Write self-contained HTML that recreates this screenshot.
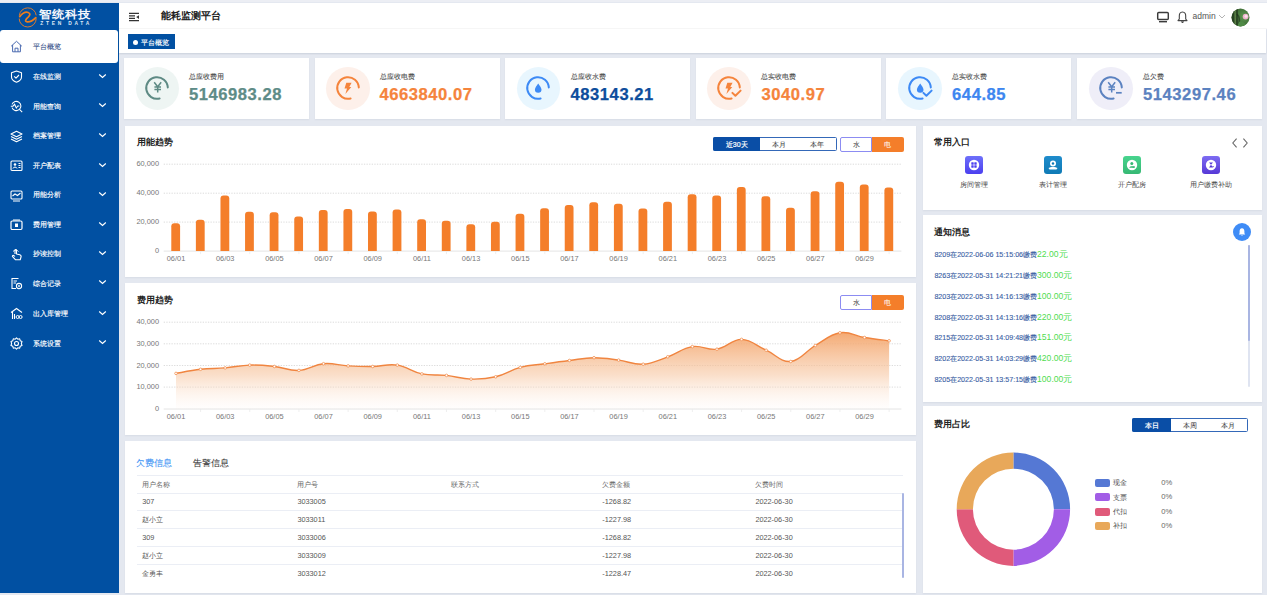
<!DOCTYPE html><html><head><meta charset="utf-8"><style>
*{margin:0;padding:0;box-sizing:border-box}
html,body{width:1267px;height:595px;overflow:hidden;background:#e4e8f0;font-family:"Liberation Sans", sans-serif}
.ab{position:absolute}
.card{position:absolute;background:#fff;box-shadow:0 1px 1.5px rgba(60,70,100,.07)}
.t{position:absolute;white-space:nowrap;line-height:1}
</style></head><body>
<div class="ab" style="left:0;top:0;width:1267px;height:2px;background:#eceef4"></div>
<div class="ab" style="left:0;top:2.5px;width:118.8px;height:590.5px;background:#0150a2"></div>
<svg class="ab" style="left:16px;top:6px" width="24" height="22" viewBox="0 0 24 22">
<path d="M3.3 9.6 A8.5 8.5 0 0 1 20.2 9.3 M20.2 12.4 A8.5 8.5 0 0 1 3.2 12.6" fill="none" stroke="#d97a30" stroke-width="1.0"/>
<path d="M3.7 10.6 C6.3 7.4 9.6 5.6 12.2 6.5 C14.8 7.4 14.1 9.3 12.2 11.1 C9.6 13.3 8.5 15.6 11.1 15.9 C14.1 16.3 17.4 14.1 19.8 11.7" fill="none" stroke="#ee7d1c" stroke-width="1.75" stroke-linecap="round"/>
</svg>
<div class="t" style="left:39px;top:8.9px;font-size:12.8px;font-weight:bold;color:#f4f7fc;letter-spacing:0.1px;transform:scaleY(0.89);transform-origin:0 0">智统科技</div>
<div class="t" style="left:40.3px;top:21.5px;font-size:4.9px;font-weight:bold;color:#dfe8f5;letter-spacing:2.75px">ZTEN DATA</div>
<div class="ab" style="left:0;top:30px;width:118.2px;height:32.5px;background:#fff;border-radius:3px"></div>
<svg class="ab" style="left:9.5px;top:39.5px" width="13" height="13" viewBox="0 0 13 13">
<path d="M1.2 6.2 L6.5 1.3 L11.8 6.2 M2.6 5 V11.8 H10.4 V5 M5 11.8 V8.2 H8 V11.8" fill="none" stroke="#4a6ab0" stroke-width="1" stroke-linejoin="round"/>
</svg>
<div class="t" style="left:33px;top:43px;font-size:7px;-webkit-text-stroke:0.12px #38528a;color:#38528a">平台概览</div>
<svg class="ab" style="left:9.6px;top:70.1px" width="13" height="13" viewBox="0 0 13 13"><path d="M6.5 1 L11.5 2.8 V7 C11.5 9.6 9 11.3 6.5 12.3 C4 11.3 1.5 9.6 1.5 7 V2.8 Z M4.2 6.4 L6 8.2 L9 5" fill="none" stroke="#fff" stroke-width="1.1" stroke-linejoin="round"/></svg>
<div class="t" style="left:33px;top:72.8px;font-size:7px;-webkit-text-stroke:0.15px #fff;color:#fff">在线监测</div>
<svg class="ab" style="left:98px;top:72.6px" width="9" height="6" viewBox="0 0 9 6"><path d="M1.2 1.5 L4.5 4.5 L7.8 1.5" fill="none" stroke="#fff" stroke-width="1.2"/></svg>
<svg class="ab" style="left:9.6px;top:99.9px" width="13" height="13" viewBox="0 0 13 13"><path d="M2 4.4 A4.6 4.6 0 1 1 2 7.6" fill="none" stroke="#fff" stroke-width="1.05"/><path d="M0.8 6.2 H3 L4.6 4.3 L6.3 8 L7.8 6 H9.4 M9.5 9.4 L12.2 12.1" fill="none" stroke="#fff" stroke-width="1.05"/></svg>
<div class="t" style="left:33px;top:102.6px;font-size:7px;-webkit-text-stroke:0.15px #fff;color:#fff">用能查询</div>
<svg class="ab" style="left:98px;top:102.4px" width="9" height="6" viewBox="0 0 9 6"><path d="M1.2 1.5 L4.5 4.5 L7.8 1.5" fill="none" stroke="#fff" stroke-width="1.2"/></svg>
<svg class="ab" style="left:9.6px;top:129.6px" width="13" height="13" viewBox="0 0 13 13"><path d="M6.5 1.2 L12 4 L6.5 6.8 L1 4 Z M1 6.5 L6.5 9.3 L12 6.5 M1 9 L6.5 11.8 L12 9" fill="none" stroke="#fff" stroke-width="1.1" stroke-linejoin="round"/></svg>
<div class="t" style="left:33px;top:132.3px;font-size:7px;-webkit-text-stroke:0.15px #fff;color:#fff">档案管理</div>
<svg class="ab" style="left:98px;top:132.1px" width="9" height="6" viewBox="0 0 9 6"><path d="M1.2 1.5 L4.5 4.5 L7.8 1.5" fill="none" stroke="#fff" stroke-width="1.2"/></svg>
<svg class="ab" style="left:9.6px;top:159.4px" width="13" height="13" viewBox="0 0 13 13"><rect x="1" y="2" width="11" height="9.5" rx="1" fill="none" stroke="#fff" stroke-width="1.1"/><circle cx="5" cy="5.5" r="1.3" fill="#fff"/><path d="M3 9.5 C3.3 7.6 6.7 7.6 7 9.5 M8.5 4.5 H10.5 M8.5 6.5 H10.5 M8.5 8.5 H10.5" fill="none" stroke="#fff" stroke-width="1"/></svg>
<div class="t" style="left:33px;top:162.1px;font-size:7px;-webkit-text-stroke:0.15px #fff;color:#fff">开户配表</div>
<svg class="ab" style="left:98px;top:161.9px" width="9" height="6" viewBox="0 0 9 6"><path d="M1.2 1.5 L4.5 4.5 L7.8 1.5" fill="none" stroke="#fff" stroke-width="1.2"/></svg>
<svg class="ab" style="left:9.6px;top:188.6px" width="13" height="13" viewBox="0 0 13 13"><rect x="1" y="2" width="11" height="8" rx="1" fill="none" stroke="#fff" stroke-width="1.1"/><path d="M2.5 7 L5 5 L7.5 6.5 L10.5 4 M3 12 H10" fill="none" stroke="#fff" stroke-width="1.1"/></svg>
<div class="t" style="left:33px;top:191.3px;font-size:7px;-webkit-text-stroke:0.15px #fff;color:#fff">用能分析</div>
<svg class="ab" style="left:98px;top:191.1px" width="9" height="6" viewBox="0 0 9 6"><path d="M1.2 1.5 L4.5 4.5 L7.8 1.5" fill="none" stroke="#fff" stroke-width="1.2"/></svg>
<svg class="ab" style="left:9.6px;top:218.4px" width="13" height="13" viewBox="0 0 13 13"><rect x="1" y="3" width="11" height="8.5" rx="1.2" fill="none" stroke="#fff" stroke-width="1.2"/><rect x="5" y="5.5" width="3" height="3.5" fill="#fff"/><path d="M3 2 H10" stroke="#fff" stroke-width="1"/></svg>
<div class="t" style="left:33px;top:221.1px;font-size:7px;-webkit-text-stroke:0.15px #fff;color:#fff">费用管理</div>
<svg class="ab" style="left:98px;top:220.9px" width="9" height="6" viewBox="0 0 9 6"><path d="M1.2 1.5 L4.5 4.5 L7.8 1.5" fill="none" stroke="#fff" stroke-width="1.2"/></svg>
<svg class="ab" style="left:9.6px;top:247.6px" width="13" height="13" viewBox="0 0 13 13"><path d="M5 6 V2.2 C5 1.3 6.5 1.3 6.5 2.2 V6 L9.8 6.8 C11 7.2 11.3 8 11 9 L10.2 11.8 H5.6 L2.6 8.6 C2.1 8 2.8 7.1 3.6 7.5 L5 8.4" fill="none" stroke="#fff" stroke-width="1.1" stroke-linejoin="round"/><path d="M3 3.5 A3.5 3.5 0 0 1 8.5 3.5" fill="none" stroke="#fff" stroke-width="0.9"/></svg>
<div class="t" style="left:33px;top:250.3px;font-size:7px;-webkit-text-stroke:0.15px #fff;color:#fff">抄读控制</div>
<svg class="ab" style="left:98px;top:250.1px" width="9" height="6" viewBox="0 0 9 6"><path d="M1.2 1.5 L4.5 4.5 L7.8 1.5" fill="none" stroke="#fff" stroke-width="1.2"/></svg>
<svg class="ab" style="left:9.6px;top:276.9px" width="13" height="13" viewBox="0 0 13 13"><path d="M8.5 1.5 H2 V11.5 H6" fill="none" stroke="#fff" stroke-width="1.1"/><path d="M3.5 4 H7 M3.5 6 H6" stroke="#fff" stroke-width="1"/><circle cx="9" cy="9" r="2.6" fill="none" stroke="#fff" stroke-width="1.1"/><circle cx="9" cy="9" r="0.9" fill="#fff"/></svg>
<div class="t" style="left:33px;top:279.6px;font-size:7px;-webkit-text-stroke:0.15px #fff;color:#fff">综合记录</div>
<svg class="ab" style="left:98px;top:279.4px" width="9" height="6" viewBox="0 0 9 6"><path d="M1.2 1.5 L4.5 4.5 L7.8 1.5" fill="none" stroke="#fff" stroke-width="1.2"/></svg>
<svg class="ab" style="left:9.6px;top:307.2px" width="13" height="13" viewBox="0 0 13 13"><path d="M1 5.5 L6.5 1.5 L12 5.5 M2.5 4.5 V12 M4.5 7 V12" fill="none" stroke="#fff" stroke-width="1.1"/><circle cx="7.6" cy="10" r="1.5" fill="none" stroke="#fff" stroke-width="1"/><circle cx="10.6" cy="10" r="1.5" fill="none" stroke="#fff" stroke-width="1"/></svg>
<div class="t" style="left:33px;top:309.9px;font-size:7px;-webkit-text-stroke:0.15px #fff;color:#fff">出入库管理</div>
<svg class="ab" style="left:98px;top:309.7px" width="9" height="6" viewBox="0 0 9 6"><path d="M1.2 1.5 L4.5 4.5 L7.8 1.5" fill="none" stroke="#fff" stroke-width="1.2"/></svg>
<svg class="ab" style="left:9.6px;top:336.9px" width="13" height="13" viewBox="0 0 13 13"><circle cx="6.5" cy="6.5" r="2" fill="none" stroke="#fff" stroke-width="1.1"/><path d="M6.5 0.9 L7.8 2.2 L9.7 1.8 L10.2 3.7 L12 4.4 L11.4 6.5 L12 8.6 L10.2 9.3 L9.7 11.2 L7.8 10.8 L6.5 12.1 L5.2 10.8 L3.3 11.2 L2.8 9.3 L1 8.6 L1.6 6.5 L1 4.4 L2.8 3.7 L3.3 1.8 L5.2 2.2 Z" fill="none" stroke="#fff" stroke-width="1.1" stroke-linejoin="round"/></svg>
<div class="t" style="left:33px;top:339.6px;font-size:7px;-webkit-text-stroke:0.15px #fff;color:#fff">系统设置</div>
<svg class="ab" style="left:98px;top:339.4px" width="9" height="6" viewBox="0 0 9 6"><path d="M1.2 1.5 L4.5 4.5 L7.8 1.5" fill="none" stroke="#fff" stroke-width="1.2"/></svg>
<div class="ab" style="left:118.8px;top:3px;width:1148.2px;height:26.3px;background:#fff;border-bottom:1px solid #f6f6f6"></div>
<svg class="ab" style="left:128px;top:12px" width="12" height="10" viewBox="0 0 12 10">
<path d="M1 1.4 H11 M1 3.8 H7 M1 6.4 H7 M1 8.6 H11" stroke="#333" stroke-width="1.2"/><path d="M11 3.3 L8.2 5.1 L11 6.9 Z" fill="#333"/></svg>
<div class="t" style="left:160.5px;top:11.2px;font-size:10.4px;font-weight:bold;color:#222">能耗监测平台</div>
<svg class="ab" style="left:1156px;top:11px" width="14" height="12" viewBox="0 0 14 12">
<rect x="1.7" y="1.4" width="10.6" height="7" rx="1" fill="none" stroke="#3a3a3a" stroke-width="1.45"/><path d="M3 10.7 H11" stroke="#3a3a3a" stroke-width="1.4"/></svg>
<svg class="ab" style="left:1177px;top:11px" width="11" height="12" viewBox="0 0 11 12">
<path d="M5.5 1 C3 1 2.3 3.2 2.3 5 V8 L1 9.6 H10 L8.7 8 V5 C8.7 3.2 8 1 5.5 1 Z M4.4 10.6 L5.5 11.5 L6.6 10.6" fill="none" stroke="#444" stroke-width="1.1" stroke-linejoin="round"/></svg>
<div class="t" style="left:1192.5px;top:12.2px;font-size:8.5px;color:#555">admin</div>
<svg class="ab" style="left:1217.8px;top:14px" width="8" height="5" viewBox="0 0 8 5"><path d="M1 1 L4 4 L7 1" fill="none" stroke="#aaa" stroke-width="0.9"/></svg>
<svg class="ab" style="left:1231px;top:8px" width="19" height="19" viewBox="0 0 19 19">
<defs><clipPath id="av"><circle cx="9.5" cy="9.5" r="9"/></clipPath><radialGradient id="avg" cx="0.65" cy="0.45" r="0.75"><stop offset="0" stop-color="#5f9a52"/><stop offset="1" stop-color="#2c5226"/></radialGradient></defs>
<g clip-path="url(#av)"><rect width="19" height="19" fill="url(#avg)"/><path d="M0 0 H7 V19 H0 Z" fill="#233a1e" opacity=".75"/><path d="M4.2 0 C3.8 6 4.5 12 4 19" stroke="#7fa860" stroke-width="0.9" fill="none"/><path d="M6 6 C8 8 9 11 8 16" stroke="#1b2d18" stroke-width="1.6" fill="none" opacity=".6"/><path d="M8 14 C11 12 14 15 17 19 H6 Z" fill="#4f8a45"/><circle cx="14.6" cy="8.6" r="2.9" fill="#eeb3cc"/><circle cx="15" cy="8.2" r="1.5" fill="#fbe3ec"/></g></svg>
<div class="ab" style="left:118.8px;top:29.3px;width:1147.5px;height:23.9px;background:#fff;box-shadow:0 1px 1.5px rgba(60,70,100,.14)"></div>
<div class="ab" style="left:128px;top:34px;width:47px;height:15.3px;background:#0150a2"></div>
<div class="ab" style="left:133px;top:39.6px;width:5px;height:5px;border-radius:50%;background:#fff"></div>
<div class="t" style="left:141.2px;top:38.9px;font-size:7px;color:#fff;-webkit-text-stroke:0.15px #fff">平台概览</div>
<div class="card" style="left:124.0px;top:57.5px;width:185.3px;height:61.2px"></div>
<div class="ab" style="left:135.6px;top:66.6px;width:43.4px;height:43.4px;border-radius:50%;background:#eef5f3"></div>
<svg class="ab" style="left:135.3px;top:66.2px" width="44" height="44" viewBox="0 0 44 44"><path d="M32.8 21.4 A10.8 10.8 0 1 0 24.6 32.5" fill="none" stroke="#5e8a84" stroke-width="2" stroke-linecap="round"/><path d="M19.2 16.3 L22.7 20.7 L26.2 16.3 M22.7 20.7 V26.4 M19.4 21 H26 M19.4 23.5 H26" fill="none" stroke="#5e8a84" stroke-width="1.5"/></svg>
<div class="t" style="left:189.3px;top:73px;font-size:7px;color:#4d4d4d;-webkit-text-stroke:0.1px #4d4d4d">总应收费用</div>
<div class="t" style="left:188.9px;top:87px;font-size:16.6px;font-weight:bold;color:#5e8c87;letter-spacing:0.55px;-webkit-text-stroke:0.25px #5e8c87">5146983.28</div>
<div class="card" style="left:315.0px;top:57.5px;width:185.3px;height:61.2px"></div>
<div class="ab" style="left:326.3px;top:66.6px;width:43.4px;height:43.4px;border-radius:50%;background:#fdf0ea"></div>
<svg class="ab" style="left:326.0px;top:66.2px" width="44" height="44" viewBox="0 0 44 44"><path d="M32.8 21.4 A10.8 10.8 0 1 0 24.6 32.5" fill="none" stroke="#f5843c" stroke-width="2" stroke-linecap="round"/><path d="M20.3 16.8 L25.6 16.8 L23.3 20.9 L25.3 20.9 L19.4 27.9 L21 22.5 L18.5 22.5 Z" fill="#f5843c"/></svg>
<div class="t" style="left:379.8px;top:73px;font-size:7px;color:#4d4d4d;-webkit-text-stroke:0.1px #4d4d4d">总应收电费</div>
<div class="t" style="left:379.4px;top:87px;font-size:16.6px;font-weight:bold;color:#f5843c;letter-spacing:0.55px;-webkit-text-stroke:0.25px #f5843c">4663840.07</div>
<div class="card" style="left:505.0px;top:57.5px;width:185.3px;height:61.2px"></div>
<div class="ab" style="left:516.6px;top:66.6px;width:43.4px;height:43.4px;border-radius:50%;background:#e8f6fe"></div>
<svg class="ab" style="left:516.3px;top:66.2px" width="44" height="44" viewBox="0 0 44 44"><path d="M32.8 21.4 A10.8 10.8 0 1 0 24.6 32.5" fill="none" stroke="#3d8af5" stroke-width="2" stroke-linecap="round"/><path d="M22.2 17.4 C21 19.4 18.9 21.6 18.9 23.5 A3.3 3.3 0 0 0 25.5 23.5 C25.5 21.6 23.4 19.4 22.2 17.4 Z" fill="#3d8af5"/></svg>
<div class="t" style="left:570.6px;top:73px;font-size:7px;color:#4d4d4d;-webkit-text-stroke:0.1px #4d4d4d">总应收水费</div>
<div class="t" style="left:570.5px;top:87px;font-size:16.6px;font-weight:bold;color:#0d4d9c;letter-spacing:0.55px;-webkit-text-stroke:0.25px #0d4d9c">483143.21</div>
<div class="card" style="left:696.0px;top:57.5px;width:185.3px;height:61.2px"></div>
<div class="ab" style="left:707.3px;top:66.6px;width:43.4px;height:43.4px;border-radius:50%;background:#fdf0ea"></div>
<svg class="ab" style="left:707.0px;top:66.2px" width="44" height="44" viewBox="0 0 44 44"><path d="M32.8 21.4 A10.8 10.8 0 1 0 24.6 32.5" fill="none" stroke="#f5843c" stroke-width="2" stroke-linecap="round"/><path d="M20.3 16.8 L25.6 16.8 L23.3 20.9 L25.3 20.9 L19.4 27.9 L21 22.5 L18.5 22.5 Z" fill="#f5843c"/><path d="M25.4 26.9 L28.4 29.8 L33.6 24.6" fill="none" stroke="#f5843c" stroke-width="2" stroke-linecap="round" stroke-linejoin="round"/></svg>
<div class="t" style="left:761.4px;top:73px;font-size:7px;color:#4d4d4d;-webkit-text-stroke:0.1px #4d4d4d">总实收电费</div>
<div class="t" style="left:761.4px;top:87px;font-size:16.6px;font-weight:bold;color:#f5843c;letter-spacing:0.55px;-webkit-text-stroke:0.25px #f5843c">3040.97</div>
<div class="card" style="left:886.0px;top:57.5px;width:185.3px;height:61.2px"></div>
<div class="ab" style="left:898.3px;top:66.6px;width:43.4px;height:43.4px;border-radius:50%;background:#e8f6fe"></div>
<svg class="ab" style="left:898.0px;top:66.2px" width="44" height="44" viewBox="0 0 44 44"><path d="M32.8 21.4 A10.8 10.8 0 1 0 24.6 32.5" fill="none" stroke="#3d8af5" stroke-width="2" stroke-linecap="round"/><path d="M22.2 17.4 C21 19.4 18.9 21.6 18.9 23.5 A3.3 3.3 0 0 0 25.5 23.5 C25.5 21.6 23.4 19.4 22.2 17.4 Z" fill="#3d8af5"/><path d="M25.4 26.9 L28.4 29.8 L33.6 24.6" fill="none" stroke="#3d8af5" stroke-width="2" stroke-linecap="round" stroke-linejoin="round"/></svg>
<div class="t" style="left:951.8px;top:73px;font-size:7px;color:#4d4d4d;-webkit-text-stroke:0.1px #4d4d4d">总实收水费</div>
<div class="t" style="left:952.1px;top:87px;font-size:16.6px;font-weight:bold;color:#3d86f0;letter-spacing:0.55px;-webkit-text-stroke:0.25px #3d86f0">644.85</div>
<div class="card" style="left:1077.0px;top:57.5px;width:185.3px;height:61.2px"></div>
<div class="ab" style="left:1089.4px;top:66.6px;width:43.4px;height:43.4px;border-radius:50%;background:#efeef8"></div>
<svg class="ab" style="left:1089.1px;top:66.2px" width="44" height="44" viewBox="0 0 44 44"><path d="M32.8 21.4 A10.8 10.8 0 1 0 24.6 32.5" fill="none" stroke="#5b82c0" stroke-width="2" stroke-linecap="round"/><path d="M19.2 16.3 L22.7 20.7 L26.2 16.3 M22.7 20.7 V26.4 M19.4 21 H26 M19.4 23.5 H26" fill="none" stroke="#5b82c0" stroke-width="1.5"/><path d="M27 26.8 H32.7" stroke="#5b82c0" stroke-width="1.7"/></svg>
<div class="t" style="left:1142.6px;top:73px;font-size:7px;color:#4d4d4d;-webkit-text-stroke:0.1px #4d4d4d">总欠费</div>
<div class="t" style="left:1143.0px;top:87px;font-size:16.6px;font-weight:bold;color:#5b82c0;letter-spacing:0.55px;-webkit-text-stroke:0.25px #5b82c0">5143297.46</div>
<div class="card" style="left:125px;top:125.5px;width:791px;height:151.8px"></div>
<div class="t" style="left:136.5px;top:138px;font-size:8.5px;font-weight:bold;color:#222">用能趋势</div>
<div class="ab" style="left:713.4px;top:137.2px;width:123.2px;height:14.2px;border:1px solid #3468b8;border-radius:1.5px;background:#fff"></div>
<div class="ab" style="left:713.4px;top:137.2px;width:46.6px;height:14.2px;background:#0a4ea6;border-radius:2px 0 0 2px"></div>
<div class="t" style="left:713.4px;top:140.6px;width:46.6px;text-align:center;font-size:7px;color:#fff;-webkit-text-stroke:0.2px #fff">近30天</div>
<div class="t" style="left:760.0px;top:140.6px;width:38.3px;text-align:center;font-size:7px;color:#333;">本月</div>
<div class="t" style="left:798.3px;top:140.6px;width:38.3px;text-align:center;font-size:7px;color:#333;">本年</div>
<div class="ab" style="left:840.3px;top:137.2px;width:31.5px;height:14.6px;border:1px solid #8c8cf2;border-radius:2px 0 0 2px;background:#fff"></div>
<div class="t" style="left:840.3px;top:140.8px;width:31.5px;text-align:center;font-size:7px;color:#333">水</div>
<div class="ab" style="left:871.8px;top:137.2px;width:31.8px;height:14.6px;background:#f47e2a;border-radius:0 2px 2px 0"></div>
<div class="t" style="left:871.8px;top:140.8px;width:31.8px;text-align:center;font-size:7px;color:#fff">电</div>
<svg class="ab" style="left:0;top:0" width="1267" height="595" viewBox="0 0 1267 595"><path d="M163.7 164.2 H901.4" stroke="#d0d0d0" stroke-width="0.75" stroke-dasharray="1.3 1.3"/><path d="M163.7 193.2 H901.4" stroke="#d0d0d0" stroke-width="0.75" stroke-dasharray="1.3 1.3"/><path d="M163.7 222.1 H901.4" stroke="#d0d0d0" stroke-width="0.75" stroke-dasharray="1.3 1.3"/><path d="M163.7 251.1 H901.4" stroke="#e4e4e4" stroke-width="1"/><path d="M200.58 251.1 V254.1" stroke="#ebebeb" stroke-width="0.8"/><path d="M249.76 251.1 V254.1" stroke="#ebebeb" stroke-width="0.8"/><path d="M298.94 251.1 V254.1" stroke="#ebebeb" stroke-width="0.8"/><path d="M348.12 251.1 V254.1" stroke="#ebebeb" stroke-width="0.8"/><path d="M397.30 251.1 V254.1" stroke="#ebebeb" stroke-width="0.8"/><path d="M446.49 251.1 V254.1" stroke="#ebebeb" stroke-width="0.8"/><path d="M495.66 251.1 V254.1" stroke="#ebebeb" stroke-width="0.8"/><path d="M544.85 251.1 V254.1" stroke="#ebebeb" stroke-width="0.8"/><path d="M594.02 251.1 V254.1" stroke="#ebebeb" stroke-width="0.8"/><path d="M643.20 251.1 V254.1" stroke="#ebebeb" stroke-width="0.8"/><path d="M692.38 251.1 V254.1" stroke="#ebebeb" stroke-width="0.8"/><path d="M741.57 251.1 V254.1" stroke="#ebebeb" stroke-width="0.8"/><path d="M790.74 251.1 V254.1" stroke="#ebebeb" stroke-width="0.8"/><path d="M839.92 251.1 V254.1" stroke="#ebebeb" stroke-width="0.8"/><path d="M889.11 251.1 V254.1" stroke="#ebebeb" stroke-width="0.8"/><path d="M171.29 251.10 V226.30 Q171.29 223.30 174.29 223.30 H177.09 Q180.09 223.30 180.09 226.30 V251.10 Z" fill="#f47e2a"/><path d="M195.88 251.10 V222.80 Q195.88 219.80 198.88 219.80 H201.68 Q204.68 219.80 204.68 222.80 V251.10 Z" fill="#f47e2a"/><path d="M220.47 251.10 V198.60 Q220.47 195.60 223.47 195.60 H226.27 Q229.27 195.60 229.27 198.60 V251.10 Z" fill="#f47e2a"/><path d="M245.06 251.10 V214.80 Q245.06 211.80 248.06 211.80 H250.86 Q253.86 211.80 253.86 214.80 V251.10 Z" fill="#f47e2a"/><path d="M269.66 251.10 V215.30 Q269.66 212.30 272.66 212.30 H275.46 Q278.46 212.30 278.46 215.30 V251.10 Z" fill="#f47e2a"/><path d="M294.25 251.10 V219.40 Q294.25 216.40 297.25 216.40 H300.05 Q303.05 216.40 303.05 219.40 V251.10 Z" fill="#f47e2a"/><path d="M318.83 251.10 V213.00 Q318.83 210.00 321.83 210.00 H324.63 Q327.63 210.00 327.63 213.00 V251.10 Z" fill="#f47e2a"/><path d="M343.43 251.10 V212.00 Q343.43 209.00 346.43 209.00 H349.23 Q352.23 209.00 352.23 212.00 V251.10 Z" fill="#f47e2a"/><path d="M368.01 251.10 V214.40 Q368.01 211.40 371.01 211.40 H373.81 Q376.81 211.40 376.81 214.40 V251.10 Z" fill="#f47e2a"/><path d="M392.60 251.10 V212.60 Q392.60 209.60 395.60 209.60 H398.40 Q401.40 209.60 401.40 212.60 V251.10 Z" fill="#f47e2a"/><path d="M417.19 251.10 V222.20 Q417.19 219.20 420.19 219.20 H423.00 Q426.00 219.20 426.00 222.20 V251.10 Z" fill="#f47e2a"/><path d="M441.79 251.10 V223.80 Q441.79 220.80 444.79 220.80 H447.59 Q450.59 220.80 450.59 223.80 V251.10 Z" fill="#f47e2a"/><path d="M466.38 251.10 V227.30 Q466.38 224.30 469.38 224.30 H472.18 Q475.18 224.30 475.18 227.30 V251.10 Z" fill="#f47e2a"/><path d="M490.96 251.10 V224.80 Q490.96 221.80 493.96 221.80 H496.76 Q499.76 221.80 499.76 224.80 V251.10 Z" fill="#f47e2a"/><path d="M515.56 251.10 V216.80 Q515.56 213.80 518.56 213.80 H521.36 Q524.36 213.80 524.36 216.80 V251.10 Z" fill="#f47e2a"/><path d="M540.15 251.10 V211.30 Q540.15 208.30 543.15 208.30 H545.95 Q548.95 208.30 548.95 211.30 V251.10 Z" fill="#f47e2a"/><path d="M564.74 251.10 V208.00 Q564.74 205.00 567.74 205.00 H570.53 Q573.53 205.00 573.53 208.00 V251.10 Z" fill="#f47e2a"/><path d="M589.33 251.10 V205.30 Q589.33 202.30 592.33 202.30 H595.12 Q598.12 202.30 598.12 205.30 V251.10 Z" fill="#f47e2a"/><path d="M613.92 251.10 V206.80 Q613.92 203.80 616.92 203.80 H619.72 Q622.72 203.80 622.72 206.80 V251.10 Z" fill="#f47e2a"/><path d="M638.50 251.10 V211.50 Q638.50 208.50 641.50 208.50 H644.30 Q647.30 208.50 647.30 211.50 V251.10 Z" fill="#f47e2a"/><path d="M663.10 251.10 V204.70 Q663.10 201.70 666.10 201.70 H668.89 Q671.89 201.70 671.89 204.70 V251.10 Z" fill="#f47e2a"/><path d="M687.69 251.10 V197.20 Q687.69 194.20 690.69 194.20 H693.49 Q696.49 194.20 696.49 197.20 V251.10 Z" fill="#f47e2a"/><path d="M712.27 251.10 V198.50 Q712.27 195.50 715.27 195.50 H718.07 Q721.07 195.50 721.07 198.50 V251.10 Z" fill="#f47e2a"/><path d="M736.87 251.10 V189.90 Q736.87 186.90 739.87 186.90 H742.67 Q745.67 186.90 745.67 189.90 V251.10 Z" fill="#f47e2a"/><path d="M761.46 251.10 V199.20 Q761.46 196.20 764.46 196.20 H767.25 Q770.25 196.20 770.25 199.20 V251.10 Z" fill="#f47e2a"/><path d="M786.04 251.10 V210.70 Q786.04 207.70 789.04 207.70 H791.84 Q794.84 207.70 794.84 210.70 V251.10 Z" fill="#f47e2a"/><path d="M810.64 251.10 V194.30 Q810.64 191.30 813.64 191.30 H816.44 Q819.44 191.30 819.44 194.30 V251.10 Z" fill="#f47e2a"/><path d="M835.23 251.10 V184.80 Q835.23 181.80 838.23 181.80 H841.02 Q844.02 181.80 844.02 184.80 V251.10 Z" fill="#f47e2a"/><path d="M859.81 251.10 V187.50 Q859.81 184.50 862.81 184.50 H865.61 Q868.61 184.50 868.61 187.50 V251.10 Z" fill="#f47e2a"/><path d="M884.41 251.10 V190.60 Q884.41 187.60 887.41 187.60 H890.21 Q893.21 187.60 893.21 190.60 V251.10 Z" fill="#f47e2a"/></svg>
<div class="t" style="left:100px;width:59px;text-align:right;top:160.4px;font-size:7.4px;color:#777">60,000</div>
<div class="t" style="left:100px;width:59px;text-align:right;top:189.4px;font-size:7.4px;color:#777">40,000</div>
<div class="t" style="left:100px;width:59px;text-align:right;top:218.3px;font-size:7.4px;color:#777">20,000</div>
<div class="t" style="left:100px;width:59px;text-align:right;top:247.3px;font-size:7.4px;color:#777">0</div>
<div class="t" style="left:161.0px;width:30px;text-align:center;top:254.8px;font-size:7.4px;color:#777">06/01</div>
<div class="t" style="left:210.2px;width:30px;text-align:center;top:254.8px;font-size:7.4px;color:#777">06/03</div>
<div class="t" style="left:259.4px;width:30px;text-align:center;top:254.8px;font-size:7.4px;color:#777">06/05</div>
<div class="t" style="left:308.5px;width:30px;text-align:center;top:254.8px;font-size:7.4px;color:#777">06/07</div>
<div class="t" style="left:357.7px;width:30px;text-align:center;top:254.8px;font-size:7.4px;color:#777">06/09</div>
<div class="t" style="left:406.9px;width:30px;text-align:center;top:254.8px;font-size:7.4px;color:#777">06/11</div>
<div class="t" style="left:456.1px;width:30px;text-align:center;top:254.8px;font-size:7.4px;color:#777">06/13</div>
<div class="t" style="left:505.3px;width:30px;text-align:center;top:254.8px;font-size:7.4px;color:#777">06/15</div>
<div class="t" style="left:554.4px;width:30px;text-align:center;top:254.8px;font-size:7.4px;color:#777">06/17</div>
<div class="t" style="left:603.6px;width:30px;text-align:center;top:254.8px;font-size:7.4px;color:#777">06/19</div>
<div class="t" style="left:652.8px;width:30px;text-align:center;top:254.8px;font-size:7.4px;color:#777">06/21</div>
<div class="t" style="left:702.0px;width:30px;text-align:center;top:254.8px;font-size:7.4px;color:#777">06/23</div>
<div class="t" style="left:751.2px;width:30px;text-align:center;top:254.8px;font-size:7.4px;color:#777">06/25</div>
<div class="t" style="left:800.3px;width:30px;text-align:center;top:254.8px;font-size:7.4px;color:#777">06/27</div>
<div class="t" style="left:849.5px;width:30px;text-align:center;top:254.8px;font-size:7.4px;color:#777">06/29</div>
<div class="card" style="left:125px;top:282.8px;width:791px;height:152.2px"></div>
<div class="t" style="left:136.5px;top:295.9px;font-size:8.5px;font-weight:bold;color:#222">费用趋势</div>
<div class="ab" style="left:840.3px;top:295.1px;width:31.5px;height:14.6px;border:1px solid #8c8cf2;border-radius:2px 0 0 2px;background:#fff"></div>
<div class="t" style="left:840.3px;top:298.7px;width:31.5px;text-align:center;font-size:7px;color:#333">水</div>
<div class="ab" style="left:871.8px;top:295.1px;width:31.8px;height:14.6px;background:#f47e2a;border-radius:0 2px 2px 0"></div>
<div class="t" style="left:871.8px;top:298.7px;width:31.8px;text-align:center;font-size:7px;color:#fff">电</div>
<svg class="ab" style="left:0;top:0" width="1267" height="595" viewBox="0 0 1267 595"><defs><linearGradient id="lg" x1="0" y1="0" x2="0" y2="1"><stop offset="0" stop-color="#f3a063" stop-opacity="0.9"/><stop offset="0.55" stop-color="#f7c8a4" stop-opacity="0.6"/><stop offset="1" stop-color="#fde9db" stop-opacity="0.05"/></linearGradient></defs><path d="M163.7 322.2 H901.4" stroke="#d0d0d0" stroke-width="0.75" stroke-dasharray="1.3 1.3"/><path d="M163.7 343.8 H901.4" stroke="#d0d0d0" stroke-width="0.75" stroke-dasharray="1.3 1.3"/><path d="M163.7 365.5 H901.4" stroke="#d0d0d0" stroke-width="0.75" stroke-dasharray="1.3 1.3"/><path d="M163.7 387.1 H901.4" stroke="#d0d0d0" stroke-width="0.75" stroke-dasharray="1.3 1.3"/><path d="M163.7 409.0 H901.4" stroke="#e4e4e4" stroke-width="1"/><path d="M200.58 409.0 V412.0" stroke="#ebebeb" stroke-width="0.8"/><path d="M249.76 409.0 V412.0" stroke="#ebebeb" stroke-width="0.8"/><path d="M298.94 409.0 V412.0" stroke="#ebebeb" stroke-width="0.8"/><path d="M348.12 409.0 V412.0" stroke="#ebebeb" stroke-width="0.8"/><path d="M397.30 409.0 V412.0" stroke="#ebebeb" stroke-width="0.8"/><path d="M446.49 409.0 V412.0" stroke="#ebebeb" stroke-width="0.8"/><path d="M495.66 409.0 V412.0" stroke="#ebebeb" stroke-width="0.8"/><path d="M544.85 409.0 V412.0" stroke="#ebebeb" stroke-width="0.8"/><path d="M594.02 409.0 V412.0" stroke="#ebebeb" stroke-width="0.8"/><path d="M643.20 409.0 V412.0" stroke="#ebebeb" stroke-width="0.8"/><path d="M692.38 409.0 V412.0" stroke="#ebebeb" stroke-width="0.8"/><path d="M741.57 409.0 V412.0" stroke="#ebebeb" stroke-width="0.8"/><path d="M790.74 409.0 V412.0" stroke="#ebebeb" stroke-width="0.8"/><path d="M839.92 409.0 V412.0" stroke="#ebebeb" stroke-width="0.8"/><path d="M889.11 409.0 V412.0" stroke="#ebebeb" stroke-width="0.8"/><path d="M175.99 373.40 C180.91 372.58 190.75 370.40 200.58 369.30 C210.42 368.20 215.34 368.74 225.17 367.90 C235.01 367.06 239.93 365.38 249.76 365.10 C259.60 364.82 264.52 365.44 274.36 366.50 C284.19 367.56 289.11 370.96 298.94 370.40 C308.78 369.84 313.70 364.60 323.53 363.70 C333.37 362.80 338.29 365.34 348.12 365.90 C357.96 366.46 362.88 366.66 372.71 366.50 C382.55 366.34 387.47 363.62 397.30 365.10 C407.14 366.58 412.06 371.84 421.89 373.90 C431.73 375.96 436.65 374.36 446.49 375.40 C456.32 376.44 461.24 378.82 471.07 379.10 C480.91 379.38 485.83 379.14 495.66 376.80 C505.50 374.46 510.42 370.00 520.25 367.40 C530.09 364.80 535.01 365.18 544.85 363.80 C554.68 362.42 559.60 361.72 569.43 360.50 C579.27 359.28 584.19 357.78 594.02 357.70 C603.86 357.62 608.78 358.80 618.62 360.10 C628.45 361.40 633.37 364.86 643.20 364.20 C653.04 363.54 657.96 360.32 667.79 356.80 C677.63 353.28 682.55 348.12 692.38 346.60 C702.22 345.08 707.14 350.64 716.97 349.20 C726.81 347.76 731.73 339.20 741.57 339.40 C751.40 339.60 756.32 345.78 766.15 350.20 C775.99 354.62 780.91 362.44 790.74 361.50 C800.58 360.56 805.50 351.24 815.34 345.50 C825.17 339.76 830.09 334.40 839.92 332.80 C849.76 331.20 854.68 335.90 864.51 337.50 C874.35 339.10 884.19 340.14 889.11 340.80 L889.11 409.00 L175.99 409.00 Z" fill="url(#lg)"/><path d="M175.99 373.40 C180.91 372.58 190.75 370.40 200.58 369.30 C210.42 368.20 215.34 368.74 225.17 367.90 C235.01 367.06 239.93 365.38 249.76 365.10 C259.60 364.82 264.52 365.44 274.36 366.50 C284.19 367.56 289.11 370.96 298.94 370.40 C308.78 369.84 313.70 364.60 323.53 363.70 C333.37 362.80 338.29 365.34 348.12 365.90 C357.96 366.46 362.88 366.66 372.71 366.50 C382.55 366.34 387.47 363.62 397.30 365.10 C407.14 366.58 412.06 371.84 421.89 373.90 C431.73 375.96 436.65 374.36 446.49 375.40 C456.32 376.44 461.24 378.82 471.07 379.10 C480.91 379.38 485.83 379.14 495.66 376.80 C505.50 374.46 510.42 370.00 520.25 367.40 C530.09 364.80 535.01 365.18 544.85 363.80 C554.68 362.42 559.60 361.72 569.43 360.50 C579.27 359.28 584.19 357.78 594.02 357.70 C603.86 357.62 608.78 358.80 618.62 360.10 C628.45 361.40 633.37 364.86 643.20 364.20 C653.04 363.54 657.96 360.32 667.79 356.80 C677.63 353.28 682.55 348.12 692.38 346.60 C702.22 345.08 707.14 350.64 716.97 349.20 C726.81 347.76 731.73 339.20 741.57 339.40 C751.40 339.60 756.32 345.78 766.15 350.20 C775.99 354.62 780.91 362.44 790.74 361.50 C800.58 360.56 805.50 351.24 815.34 345.50 C825.17 339.76 830.09 334.40 839.92 332.80 C849.76 331.20 854.68 335.90 864.51 337.50 C874.35 339.10 884.19 340.14 889.11 340.80" fill="none" stroke="#f08540" stroke-width="1.4"/><circle cx="175.99" cy="373.40" r="1.3" fill="#fff" stroke="#f08540" stroke-width="0.7"/><circle cx="200.58" cy="369.30" r="1.3" fill="#fff" stroke="#f08540" stroke-width="0.7"/><circle cx="225.17" cy="367.90" r="1.3" fill="#fff" stroke="#f08540" stroke-width="0.7"/><circle cx="249.76" cy="365.10" r="1.3" fill="#fff" stroke="#f08540" stroke-width="0.7"/><circle cx="274.36" cy="366.50" r="1.3" fill="#fff" stroke="#f08540" stroke-width="0.7"/><circle cx="298.94" cy="370.40" r="1.3" fill="#fff" stroke="#f08540" stroke-width="0.7"/><circle cx="323.53" cy="363.70" r="1.3" fill="#fff" stroke="#f08540" stroke-width="0.7"/><circle cx="348.12" cy="365.90" r="1.3" fill="#fff" stroke="#f08540" stroke-width="0.7"/><circle cx="372.71" cy="366.50" r="1.3" fill="#fff" stroke="#f08540" stroke-width="0.7"/><circle cx="397.30" cy="365.10" r="1.3" fill="#fff" stroke="#f08540" stroke-width="0.7"/><circle cx="421.89" cy="373.90" r="1.3" fill="#fff" stroke="#f08540" stroke-width="0.7"/><circle cx="446.49" cy="375.40" r="1.3" fill="#fff" stroke="#f08540" stroke-width="0.7"/><circle cx="471.07" cy="379.10" r="1.3" fill="#fff" stroke="#f08540" stroke-width="0.7"/><circle cx="495.66" cy="376.80" r="1.3" fill="#fff" stroke="#f08540" stroke-width="0.7"/><circle cx="520.25" cy="367.40" r="1.3" fill="#fff" stroke="#f08540" stroke-width="0.7"/><circle cx="544.85" cy="363.80" r="1.3" fill="#fff" stroke="#f08540" stroke-width="0.7"/><circle cx="569.43" cy="360.50" r="1.3" fill="#fff" stroke="#f08540" stroke-width="0.7"/><circle cx="594.02" cy="357.70" r="1.3" fill="#fff" stroke="#f08540" stroke-width="0.7"/><circle cx="618.62" cy="360.10" r="1.3" fill="#fff" stroke="#f08540" stroke-width="0.7"/><circle cx="643.20" cy="364.20" r="1.3" fill="#fff" stroke="#f08540" stroke-width="0.7"/><circle cx="667.79" cy="356.80" r="1.3" fill="#fff" stroke="#f08540" stroke-width="0.7"/><circle cx="692.38" cy="346.60" r="1.3" fill="#fff" stroke="#f08540" stroke-width="0.7"/><circle cx="716.97" cy="349.20" r="1.3" fill="#fff" stroke="#f08540" stroke-width="0.7"/><circle cx="741.57" cy="339.40" r="1.3" fill="#fff" stroke="#f08540" stroke-width="0.7"/><circle cx="766.15" cy="350.20" r="1.3" fill="#fff" stroke="#f08540" stroke-width="0.7"/><circle cx="790.74" cy="361.50" r="1.3" fill="#fff" stroke="#f08540" stroke-width="0.7"/><circle cx="815.34" cy="345.50" r="1.3" fill="#fff" stroke="#f08540" stroke-width="0.7"/><circle cx="839.92" cy="332.80" r="1.3" fill="#fff" stroke="#f08540" stroke-width="0.7"/><circle cx="864.51" cy="337.50" r="1.3" fill="#fff" stroke="#f08540" stroke-width="0.7"/><circle cx="889.11" cy="340.80" r="1.3" fill="#fff" stroke="#f08540" stroke-width="0.7"/></svg>
<div class="t" style="left:100px;width:59px;text-align:right;top:318.4px;font-size:7.4px;color:#777">40,000</div>
<div class="t" style="left:100px;width:59px;text-align:right;top:340.0px;font-size:7.4px;color:#777">30,000</div>
<div class="t" style="left:100px;width:59px;text-align:right;top:361.7px;font-size:7.4px;color:#777">20,000</div>
<div class="t" style="left:100px;width:59px;text-align:right;top:383.3px;font-size:7.4px;color:#777">10,000</div>
<div class="t" style="left:100px;width:59px;text-align:right;top:405.2px;font-size:7.4px;color:#777">0</div>
<div class="t" style="left:161.0px;width:30px;text-align:center;top:412.8px;font-size:7.4px;color:#777">06/01</div>
<div class="t" style="left:210.2px;width:30px;text-align:center;top:412.8px;font-size:7.4px;color:#777">06/03</div>
<div class="t" style="left:259.4px;width:30px;text-align:center;top:412.8px;font-size:7.4px;color:#777">06/05</div>
<div class="t" style="left:308.5px;width:30px;text-align:center;top:412.8px;font-size:7.4px;color:#777">06/07</div>
<div class="t" style="left:357.7px;width:30px;text-align:center;top:412.8px;font-size:7.4px;color:#777">06/09</div>
<div class="t" style="left:406.9px;width:30px;text-align:center;top:412.8px;font-size:7.4px;color:#777">06/11</div>
<div class="t" style="left:456.1px;width:30px;text-align:center;top:412.8px;font-size:7.4px;color:#777">06/13</div>
<div class="t" style="left:505.3px;width:30px;text-align:center;top:412.8px;font-size:7.4px;color:#777">06/15</div>
<div class="t" style="left:554.4px;width:30px;text-align:center;top:412.8px;font-size:7.4px;color:#777">06/17</div>
<div class="t" style="left:603.6px;width:30px;text-align:center;top:412.8px;font-size:7.4px;color:#777">06/19</div>
<div class="t" style="left:652.8px;width:30px;text-align:center;top:412.8px;font-size:7.4px;color:#777">06/21</div>
<div class="t" style="left:702.0px;width:30px;text-align:center;top:412.8px;font-size:7.4px;color:#777">06/23</div>
<div class="t" style="left:751.2px;width:30px;text-align:center;top:412.8px;font-size:7.4px;color:#777">06/25</div>
<div class="t" style="left:800.3px;width:30px;text-align:center;top:412.8px;font-size:7.4px;color:#777">06/27</div>
<div class="t" style="left:849.5px;width:30px;text-align:center;top:412.8px;font-size:7.4px;color:#777">06/29</div>
<div class="card" style="left:125px;top:440.5px;width:791px;height:152.5px"></div>
<div class="t" style="left:136.3px;top:459.3px;font-size:8.6px;color:#3f95f5;-webkit-text-stroke:0.1px #3f95f5">欠费信息</div>
<div class="t" style="left:193.2px;top:459.3px;font-size:8.6px;color:#333;-webkit-text-stroke:0.05px #333">告警信息</div>
<div class="ab" style="left:136.6px;top:475.2px;width:766.8px;height:1px;background:#ebeef5"></div>
<div class="ab" style="left:136.6px;top:492.7px;width:766.8px;height:1px;background:#ebeef5"></div>
<div class="ab" style="left:136.6px;top:510.2px;width:766.8px;height:1px;background:#ebeef5"></div>
<div class="ab" style="left:136.6px;top:527.9px;width:766.8px;height:1px;background:#ebeef5"></div>
<div class="ab" style="left:136.6px;top:545.9px;width:766.8px;height:1px;background:#ebeef5"></div>
<div class="ab" style="left:136.6px;top:564.0px;width:766.8px;height:1px;background:#ebeef5"></div>
<div class="t" style="left:142.2px;top:480.9px;font-size:7.2px;color:#666">用户名称</div>
<div class="t" style="left:297.4px;top:480.9px;font-size:7.2px;color:#666">用户号</div>
<div class="t" style="left:450.8px;top:480.9px;font-size:7.2px;color:#666">联系方式</div>
<div class="t" style="left:602.3px;top:480.9px;font-size:7.2px;color:#666">欠费金额</div>
<div class="t" style="left:755.4px;top:480.9px;font-size:7.2px;color:#666">欠费时间</div>
<div class="t" style="left:142.2px;top:498.3px;font-size:7.3px;color:#555">307</div>
<div class="t" style="left:297.4px;top:498.3px;font-size:7.3px;color:#555">3033005</div>
<div class="t" style="left:602.3px;top:498.3px;font-size:7.3px;color:#555">-1268.82</div>
<div class="t" style="left:755.4px;top:498.3px;font-size:7.3px;color:#555">2022-06-30</div>
<div class="t" style="left:142.2px;top:516.0px;font-size:7.3px;color:#555">赵小立</div>
<div class="t" style="left:297.4px;top:516.0px;font-size:7.3px;color:#555">3033011</div>
<div class="t" style="left:602.3px;top:516.0px;font-size:7.3px;color:#555">-1227.98</div>
<div class="t" style="left:755.4px;top:516.0px;font-size:7.3px;color:#555">2022-06-30</div>
<div class="t" style="left:142.2px;top:533.8px;font-size:7.3px;color:#555">309</div>
<div class="t" style="left:297.4px;top:533.8px;font-size:7.3px;color:#555">3033006</div>
<div class="t" style="left:602.3px;top:533.8px;font-size:7.3px;color:#555">-1268.82</div>
<div class="t" style="left:755.4px;top:533.8px;font-size:7.3px;color:#555">2022-06-30</div>
<div class="t" style="left:142.2px;top:551.8px;font-size:7.3px;color:#555">赵小立</div>
<div class="t" style="left:297.4px;top:551.8px;font-size:7.3px;color:#555">3033009</div>
<div class="t" style="left:602.3px;top:551.8px;font-size:7.3px;color:#555">-1227.98</div>
<div class="t" style="left:755.4px;top:551.8px;font-size:7.3px;color:#555">2022-06-30</div>
<div class="t" style="left:142.2px;top:569.7px;font-size:7.3px;color:#555">金勇丰</div>
<div class="t" style="left:297.4px;top:569.7px;font-size:7.3px;color:#555">3033012</div>
<div class="t" style="left:602.3px;top:569.7px;font-size:7.3px;color:#555">-1228.47</div>
<div class="t" style="left:755.4px;top:569.7px;font-size:7.3px;color:#555">2022-06-30</div>
<div class="ab" style="left:901.5px;top:493px;width:2.4px;height:85px;background:#a9b5e3;border-radius:1.2px"></div>
<div class="card" style="left:922.5px;top:126px;width:339.7px;height:83.8px"></div>
<div class="t" style="left:934.3px;top:138.2px;font-size:8.5px;font-weight:bold;color:#222">常用入口</div>
<svg class="ab" style="left:1230px;top:138px" width="20" height="10" viewBox="0 0 20 10"><path d="M6.6 0.7 L2.8 5 L6.6 9.3 M13.4 0.7 L17.2 5 L13.4 9.3" fill="none" stroke="#666" stroke-width="1.05"/></svg>
<svg class="ab" style="left:964.8px;top:156.3px" width="18" height="18" viewBox="0 0 18 18"><defs><linearGradient id="ggrid" x1="0" y1="0" x2="0" y2="1"><stop offset="0" stop-color="#6e70fa"/><stop offset="1" stop-color="#4b3fef"/></linearGradient></defs><rect width="18" height="18" rx="3" fill="url(#ggrid)"/><circle cx="9" cy="9" r="5.2" fill="#fff"/><rect x="6.3" y="6.3" width="2.4" height="2.4" rx="0.4" fill="#4b3fef"/><rect x="9.3" y="6.3" width="2.4" height="2.4" rx="0.4" fill="#4b3fef"/><rect x="6.3" y="9.3" width="2.4" height="2.4" rx="0.4" fill="#4b3fef"/><rect x="9.3" y="9.3" width="2.4" height="2.4" rx="0.4" fill="#4b3fef"/></svg>
<div class="t" style="left:933.8px;width:80px;text-align:center;top:181px;font-size:7px;color:#474747">房间管理</div>
<svg class="ab" style="left:1043.9px;top:156.3px" width="18" height="18" viewBox="0 0 18 18"><defs><linearGradient id="gmeter" x1="0" y1="0" x2="0" y2="1"><stop offset="0" stop-color="#1f8ccc"/><stop offset="1" stop-color="#0f7ab5"/></linearGradient></defs><rect width="18" height="18" rx="3" fill="url(#gmeter)"/><circle cx="9" cy="7.5" r="3" fill="#fff"/><circle cx="9" cy="7.5" r="1.2" fill="#0f7ab5"/><path d="M4.5 12 C6 10.5 12 10.5 13.5 12 L12.5 13.5 H5.5 Z" fill="#fff"/></svg>
<div class="t" style="left:1012.9px;width:80px;text-align:center;top:181px;font-size:7px;color:#474747">表计管理</div>
<svg class="ab" style="left:1123.2px;top:156.3px" width="18" height="18" viewBox="0 0 18 18"><defs><linearGradient id="guser" x1="0" y1="0" x2="0" y2="1"><stop offset="0" stop-color="#48d48e"/><stop offset="1" stop-color="#36b873"/></linearGradient></defs><rect width="18" height="18" rx="3" fill="url(#guser)"/><circle cx="9" cy="9" r="5.2" fill="#fff"/><circle cx="8.8" cy="7.4" r="1.5" fill="#36b873"/><path d="M6.2 11.8 C6.4 9.6 11.2 9.6 11.4 11.8 Z" fill="#36b873"/><rect x="9.6" y="10.2" width="2.2" height="1.6" fill="#36b873"/></svg>
<div class="t" style="left:1092.2px;width:80px;text-align:center;top:181px;font-size:7px;color:#474747">开户配房</div>
<svg class="ab" style="left:1202.2px;top:156.3px" width="18" height="18" viewBox="0 0 18 18"><defs><linearGradient id="gpay" x1="0" y1="0" x2="0" y2="1"><stop offset="0" stop-color="#7d6cf2"/><stop offset="1" stop-color="#5638d6"/></linearGradient></defs><rect width="18" height="18" rx="3" fill="url(#gpay)"/><circle cx="9" cy="9" r="5.2" fill="#fff"/><path d="M7 6.4 H11 L9 8.8 Z M9 8.8 L7 11.6 H11 Z" fill="#5638d6"/><path d="M10.2 10.6 H12" stroke="#5638d6" stroke-width="0.7"/></svg>
<div class="t" style="left:1171.2px;width:80px;text-align:center;top:181px;font-size:7px;color:#474747">用户缴费补助</div>
<div class="card" style="left:922.9px;top:215px;width:338.7px;height:186.8px"></div>
<div class="t" style="left:934.4px;top:228px;font-size:8.5px;font-weight:bold;color:#222">通知消息</div>
<div class="ab" style="left:1232.5px;top:222.9px;width:18px;height:18px;border-radius:50%;background:#3f8cf6"></div>
<svg class="ab" style="left:1236.5px;top:226.9px" width="10" height="10" viewBox="0 0 10 10"><path d="M5 1.2 C3.2 1.2 2.6 2.8 2.6 4.2 V6.3 L1.8 7.4 H8.2 L7.4 6.3 V4.2 C7.4 2.8 6.8 1.2 5 1.2 Z M4 8.2 H6 L5 9 Z" fill="#fff"/></svg>
<div class="ab" style="left:1248.2px;top:245.3px;width:2px;height:142px;background:#dfe4f1;border-radius:1px"></div>
<div class="ab" style="left:1248.2px;top:245.3px;width:2px;height:95.7px;background:#a9b5e2;border-radius:1px"></div>
<div class="t" style="left:934.4px;top:250.0px;font-size:7.1px;color:#3a5fa5;-webkit-text-stroke:0.12px #3a5fa5">8209在2022-06-06 15:15:06缴费<span style="font-size:8.6px;color:#4fdc4f;-webkit-text-stroke:0">22.00元</span></div>
<div class="t" style="left:934.4px;top:271.2px;font-size:7.1px;color:#3a5fa5;-webkit-text-stroke:0.12px #3a5fa5">8263在2022-05-31 14:21:21缴费<span style="font-size:8.6px;color:#4fdc4f;-webkit-text-stroke:0">300.00元</span></div>
<div class="t" style="left:934.4px;top:291.5px;font-size:7.1px;color:#3a5fa5;-webkit-text-stroke:0.12px #3a5fa5">8203在2022-05-31 14:16:13缴费<span style="font-size:8.6px;color:#4fdc4f;-webkit-text-stroke:0">100.00元</span></div>
<div class="t" style="left:934.4px;top:312.7px;font-size:7.1px;color:#3a5fa5;-webkit-text-stroke:0.12px #3a5fa5">8208在2022-05-31 14:13:16缴费<span style="font-size:8.6px;color:#4fdc4f;-webkit-text-stroke:0">220.00元</span></div>
<div class="t" style="left:934.4px;top:333.0px;font-size:7.1px;color:#3a5fa5;-webkit-text-stroke:0.12px #3a5fa5">8215在2022-05-31 14:09:48缴费<span style="font-size:8.6px;color:#4fdc4f;-webkit-text-stroke:0">151.00元</span></div>
<div class="t" style="left:934.4px;top:353.8px;font-size:7.1px;color:#3a5fa5;-webkit-text-stroke:0.12px #3a5fa5">8202在2022-05-31 14:03:29缴费<span style="font-size:8.6px;color:#4fdc4f;-webkit-text-stroke:0">420.00元</span></div>
<div class="t" style="left:934.4px;top:374.5px;font-size:7.1px;color:#3a5fa5;-webkit-text-stroke:0.12px #3a5fa5">8205在2022-05-31 13:57:15缴费<span style="font-size:8.6px;color:#4fdc4f;-webkit-text-stroke:0">100.00元</span></div>
<div class="card" style="left:922.5px;top:406.4px;width:339.9px;height:186.6px"></div>
<div class="t" style="left:934.4px;top:419.8px;font-size:8.5px;font-weight:bold;color:#222">费用占比</div>
<div class="ab" style="left:1132.4px;top:418.2px;width:115.4px;height:14.3px;border:1px solid #3468b8;border-radius:1.5px;background:#fff"></div>
<div class="ab" style="left:1132.4px;top:418.2px;width:38.3px;height:14.3px;background:#0a4ea6;border-radius:2px 0 0 2px"></div>
<div class="t" style="left:1132.4px;top:421.6px;width:38.3px;text-align:center;font-size:7px;color:#fff;-webkit-text-stroke:0.2px #fff">本日</div>
<div class="t" style="left:1170.7px;top:421.6px;width:38.5px;text-align:center;font-size:7px;color:#333;">本周</div>
<div class="t" style="left:1209.2px;top:421.6px;width:38.6px;text-align:center;font-size:7px;color:#333;">本月</div>
<svg class="ab" style="left:0;top:0" width="1267" height="595" viewBox="0 0 1267 595"><path d="M1013.40 452.50 A56.70 56.70 0 0 1 1070.10 509.20 L1053.90 509.20 A40.50 40.50 0 0 0 1013.40 468.70 Z" fill="#5578d4"/><path d="M1070.10 509.20 A56.70 56.70 0 0 1 1013.40 565.90 L1013.40 549.70 A40.50 40.50 0 0 0 1053.90 509.20 Z" fill="#a25de6"/><path d="M1013.40 565.90 A56.70 56.70 0 0 1 956.70 509.20 L972.90 509.20 A40.50 40.50 0 0 0 1013.40 549.70 Z" fill="#e05a7a"/><path d="M956.70 509.20 A56.70 56.70 0 0 1 1013.40 452.50 L1013.40 468.70 A40.50 40.50 0 0 0 972.90 509.20 Z" fill="#e8a85a"/></svg>
<div class="ab" style="left:1095.4px;top:479.2px;width:14.6px;height:8px;border-radius:2px;background:#5578d4"></div>
<div class="t" style="left:1113.4px;top:479.4px;font-size:7.3px;color:#4a4a4a">现金</div>
<div class="t" style="left:1161.2px;top:479.3px;font-size:7.6px;color:#666">0%</div>
<div class="ab" style="left:1095.4px;top:493.3px;width:14.6px;height:8px;border-radius:2px;background:#a25de6"></div>
<div class="t" style="left:1113.4px;top:493.5px;font-size:7.3px;color:#4a4a4a">支票</div>
<div class="t" style="left:1161.2px;top:493.4px;font-size:7.6px;color:#666">0%</div>
<div class="ab" style="left:1095.4px;top:507.5px;width:14.6px;height:8px;border-radius:2px;background:#e05a7a"></div>
<div class="t" style="left:1113.4px;top:507.7px;font-size:7.3px;color:#4a4a4a">代扣</div>
<div class="t" style="left:1161.2px;top:507.6px;font-size:7.6px;color:#666">0%</div>
<div class="ab" style="left:1095.4px;top:521.9px;width:14.6px;height:8px;border-radius:2px;background:#e8a85a"></div>
<div class="t" style="left:1113.4px;top:522.1px;font-size:7.3px;color:#4a4a4a">补扣</div>
<div class="t" style="left:1161.2px;top:522.0px;font-size:7.6px;color:#666">0%</div>
</body></html>
